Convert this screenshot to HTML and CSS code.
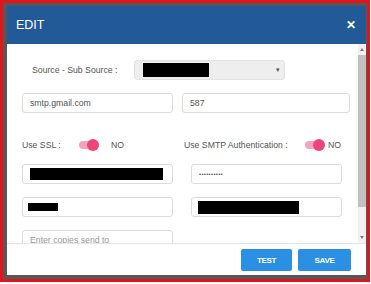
FILE: index.html
```html
<!DOCTYPE html>
<html lang="en">
<head>
  <meta charset="UTF-8">
  <title>Edit</title>
  <link rel="stylesheet" href="styles.css">
</head>
<body>
  <div class="frame">
    <div class="modal">
      <div class="modal-header">
        <span class="modal-title">EDIT</span>
        <span class="close">&#x2715;</span>
      </div>

      <div class="modal-body">
        <div class="body-content">
          <div class="row-source">
            <label class="source-label">Source - Sub Source :</label>
            <div class="select">
              <span class="redact redact-select"></span>
              <span class="caret">&#9662;</span>
            </div>
          </div>

          <div class="row-server">
            <div class="field">smtp.gmail.com</div>
            <div class="field">587</div>
          </div>

          <div class="row-switches">
            <div class="switch-group ssl">
              <span class="switch-label">Use SSL :</span>
              <span class="toggle"><span class="knob"></span></span>
              <span class="switch-value">NO</span>
            </div>
            <div class="switch-group auth">
              <span class="switch-label">Use SMTP Authentication :</span>
              <span class="toggle"><span class="knob"></span></span>
              <span class="switch-value">NO</span>
            </div>
          </div>

          <div class="row-grid">
            <div class="field"><span class="redact redact-user"></span></div>
            <div class="field dots">&bull;&bull;&bull;&bull;&bull;&bull;&bull;&bull;&bull;&bull;</div>
            <div class="field"><span class="redact redact-short"></span></div>
            <div class="field"><span class="redact redact-mail"></span></div>
            <div class="field placeholder">Enter copies send to</div>
          </div>
        </div>

        <div class="scrollbar">
          <span class="arrow arrow-up"></span>
          <span class="thumb"></span>
          <span class="arrow arrow-down"></span>
        </div>
      </div>

      <div class="modal-footer">
        <button class="btn btn-test">TEST</button>
        <button class="btn btn-save">SAVE</button>
      </div>
    </div>
  </div>
</body>
</html>
```

FILE: styles.css
```css
body {
  margin: 0;
  background: #ffffff;
  font-family: 'Liberation Sans', Arial, sans-serif;
}

.frame {
  width: 370px;
  height: 282px;
  box-sizing: border-box;
  border: 3px solid #e3151c;
  background: #575757;
  padding: 3px 1px 4px 4px;
}

.modal {
  height: 100%;
  background: #ffffff;
  display: flex;
  flex-direction: column;
}

.modal-header {
  height: 38px;
  flex-shrink: 0;
  background: #225a98;
  color: #ffffff;
  display: flex;
  align-items: center;
  justify-content: space-between;
  padding: 0 10px 0 9px;
}

.modal-title {
  font-size: 12.5px;
}

.close {
  font-size: 12px;
  font-weight: bold;
}

.modal-body {
  flex: 1;
  min-height: 0;
  display: flex;
  color: #555555;
  font-size: 8.7px;
}

.body-content {
  flex: 1;
  overflow: hidden;
  padding-top: 16px;
}

/* fake scrollbar, the page is scrolled to the top */
.scrollbar {
  width: 8px;
  flex-shrink: 0;
  background: #f1f1f1;
  display: flex;
  flex-direction: column;
  align-items: center;
}

.arrow {
  width: 0;
  height: 0;
  border-left: 2px solid transparent;
  border-right: 2px solid transparent;
}

.arrow-up {
  margin-top: 4px;
  border-bottom: 3px solid #777777;
}

.arrow-down {
  margin-top: auto;
  margin-bottom: 4px;
  border-top: 3px solid #777777;
}

.thumb {
  width: 8px;
  height: 152px;
  margin-top: 4px;
  background: #c1c1c1;
}

.row-source {
  display: flex;
  align-items: center;
  height: 20px;
}

.source-label {
  width: 127px;
  padding-left: 25px;
  box-sizing: border-box;
  white-space: nowrap;
}

.select {
  width: 151px;
  height: 20px;
  box-sizing: border-box;
  background: #eeeeee;
  border: 1px solid #e2e2e2;
  border-radius: 3px;
  display: flex;
  align-items: center;
  justify-content: space-between;
  padding: 0 4px 0 8px;
}

.caret {
  font-size: 7px;
  color: #555555;
}

.redact {
  display: block;
  background: #000000;
}

.redact-select {
  width: 66px;
  height: 14px;
}

.redact-user {
  width: 133px;
  height: 12px;
}

.redact-short {
  width: 30px;
  height: 8px;
  margin-left: -2px;
}

.redact-mail {
  width: 101px;
  height: 13px;
  margin-left: -1px;
}

.field {
  height: 20px;
  box-sizing: border-box;
  border: 1px solid #dcdcdc;
  border-radius: 3px;
  display: flex;
  align-items: center;
  padding: 0 7px;
}

.row-server {
  display: grid;
  grid-template-columns: 151px 168px;
  column-gap: 9px;
  padding-left: 15px;
  margin-top: 13px;
}

.row-switches {
  display: flex;
  align-items: center;
  height: 12px;
  margin-top: 26px;
  padding-left: 15px;
}

.switch-group {
  display: flex;
  align-items: center;
  white-space: nowrap;
}

.ssl {
  width: 162px;
}

.ssl .switch-label {
  width: 57px;
}

.ssl .toggle {
  margin-right: 14px;
}

.auth .switch-label {
  width: 121px;
}

.auth .toggle {
  margin-right: 5px;
}

.toggle {
  position: relative;
  width: 18px;
  height: 8px;
  border-radius: 4px;
  background: #f6a3bf;
}

.knob {
  position: absolute;
  top: -2px;
  right: -2px;
  width: 12px;
  height: 12px;
  border-radius: 50%;
  background: #ef4479;
}

.row-grid {
  display: grid;
  grid-template-columns: 151px 151px;
  column-gap: 18px;
  row-gap: 13px;
  padding-left: 15px;
  margin-top: 13px;
}

.dots {
  font-size: 6px;
  letter-spacing: 0.3px;
  color: #555555;
}

.placeholder {
  color: #9a9a9a;
}

.modal-footer {
  height: 32px;
  flex-shrink: 0;
  box-sizing: border-box;
  border-top: 1px solid #e5e5e5;
  display: flex;
  justify-content: flex-end;
  align-items: flex-start;
  gap: 6px;
  padding: 5px 15px 0 0;
}

.btn {
  height: 22px;
  border: none;
  border-radius: 2px;
  background: #2b8fe4;
  color: #ffffff;
  font-family: 'Liberation Sans', Arial, sans-serif;
  font-size: 8px;
  font-weight: bold;
  letter-spacing: -0.3px;
  padding: 0;
}

.btn-test {
  width: 51px;
}

.btn-save {
  width: 53px;
}
```
